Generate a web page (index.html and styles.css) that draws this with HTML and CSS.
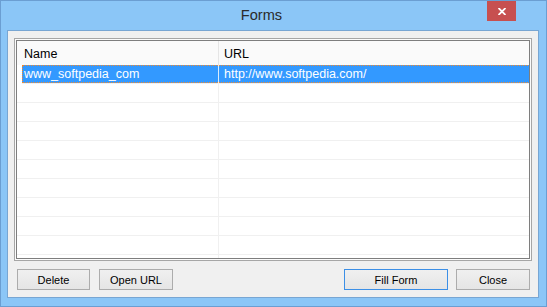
FILE: index.html
```html
<!DOCTYPE html>
<html>
<head>
<meta charset="utf-8">
<link rel="stylesheet" href="styles.css">
</head>
<body>
<div class="window">
  <div class="titlebar">
    <span class="title">Forms</span>
    <div class="close-btn">
      <svg width="8" height="7" viewBox="0 0 8 7"><path d="M0.5 0 L7.5 7 M7.5 0 L0.5 7" stroke="#fff" stroke-width="1.8"/></svg>
    </div>
  </div>
  <div class="client">
    <div class="list-outer">
      <div class="list">
        <div class="header">
          <div class="hcell first">Name</div>
          <div class="hdiv"></div>
          <div class="hcell second">URL</div>
        </div>
        <div class="row selected">
          <div class="cell first">www_softpedia_com</div>
          <div class="div"></div>
          <div class="cell second">http://www.softpedia.com/</div>
        </div>
        <div class="row"><div class="cell first"></div><div class="div"></div><div class="cell second"></div></div>
        <div class="row"><div class="cell first"></div><div class="div"></div><div class="cell second"></div></div>
        <div class="row"><div class="cell first"></div><div class="div"></div><div class="cell second"></div></div>
        <div class="row"><div class="cell first"></div><div class="div"></div><div class="cell second"></div></div>
        <div class="row"><div class="cell first"></div><div class="div"></div><div class="cell second"></div></div>
        <div class="row"><div class="cell first"></div><div class="div"></div><div class="cell second"></div></div>
        <div class="row"><div class="cell first"></div><div class="div"></div><div class="cell second"></div></div>
        <div class="row"><div class="cell first"></div><div class="div"></div><div class="cell second"></div></div>
        <div class="row"><div class="cell first"></div><div class="div"></div><div class="cell second"></div></div>
        <div class="row"><div class="cell first"></div><div class="div"></div><div class="cell second"></div></div>
      </div>
    </div>
    <div class="buttons">
      <div class="left-group">
        <button class="btn w73">Delete</button>
        <button class="btn w74">Open URL</button>
      </div>
      <div class="right-group">
        <button class="btn default w104">Fill Form</button>
        <button class="btn w74">Close</button>
      </div>
    </div>
  </div>
</div>
</body>
</html>
```

FILE: styles.css
```css
* { box-sizing: border-box; }
html, body { margin: 0; padding: 0; }
body {
  width: 547px;
  height: 307px;
  overflow: hidden;
  font-family: "Liberation Sans", Arial, sans-serif;
}
.window {
  position: relative;
  width: 547px;
  height: 307px;
  background: #8bc6f7;
  border: 1px solid #6b9ed2;
  display: flex;
  flex-direction: column;
}
.titlebar {
  height: 29px;
  display: flex;
  align-items: center;
  justify-content: center;
  padding-right: 24px;
  padding-bottom: 1px;
}
.title {
  font-size: 14.6px;
  color: #2a2a2a;
}
.close-btn {
  position: absolute;
  right: 30px;
  top: 0;
  width: 29px;
  height: 20px;
  background: #c75050;
  display: flex;
  align-items: center;
  justify-content: center;
}
.close-btn svg { display: block; }
.client {
  margin: 0 7px 0 6px;
  height: 268px;
  background: #f0f0f0;
  border: 1px solid #78a6d3;
  padding: 7px 6px 0 6px;
  display: flex;
  flex-direction: column;
}
.list-outer {
  width: 518px;
  height: 223px;
  border: 1px solid #a6a6a6;
  padding: 1px;
  background: #fbfbfb;
}
.list {
  width: 100%;
  height: 100%;
  border: 1px solid #7e7e7e;
  background: #ffffff;
  overflow: hidden;
  font-size: 12.5px;
}
.header {
  height: 24px;
  display: grid;
  grid-template-columns: 201px 1px 1fr;
  background: #fafafa;
  color: #000;
}
.hcell {
  display: flex;
  align-items: center;
  padding-top: 1px;
}
.hcell.first { padding-left: 7px; }
.hcell.second { padding-left: 5px; }
.hdiv { background: #e5e5e5; }
.row {
  height: 19px;
  display: grid;
  grid-template-columns: 201px 1px 1fr;
  border-bottom: 1px solid #f0f0f0;
  line-height: 18px;
}
.div { background: #f0f0f0; }
.cell { white-space: nowrap; }
.row.selected {
  margin-left: 5px;
  margin-right: -1px;
  grid-template-columns: 196px 1px 1fr;
  background: #3399ff;
  color: #fff;
  border-bottom-color: #f0f0f0;
  height: 19px;
  position: relative;
}
.row.selected::after {
  content: "";
  position: absolute;
  left: 0; top: 0; right: 0; bottom: 0;
  border: 1px dotted #f08a30;
}
.row.selected .div { background: #dcecfb; }
.row.selected .cell.first { padding-left: 2px; }
.cell.second { padding-left: 5px; }
.buttons {
  margin-top: 8px;
  padding: 0 2px 0 3px;
  display: flex;
  justify-content: space-between;
}
.left-group, .right-group {
  display: flex;
}
.left-group { gap: 9px; }
.right-group { gap: 8px; }
.btn {
  height: 21px;
  margin: 0;
  padding: 0;
  border: 1px solid #acacac;
  background: linear-gradient(#f0f0f0, #e5e5e5);
  font-family: "Liberation Sans", Arial, sans-serif;
  font-size: 11px;
  color: #000;
}
.btn.default { border-color: #3c8fe6; }
.w73 { width: 73px; }
.w74 { width: 74px; }
.w104 { width: 104px; }
```
